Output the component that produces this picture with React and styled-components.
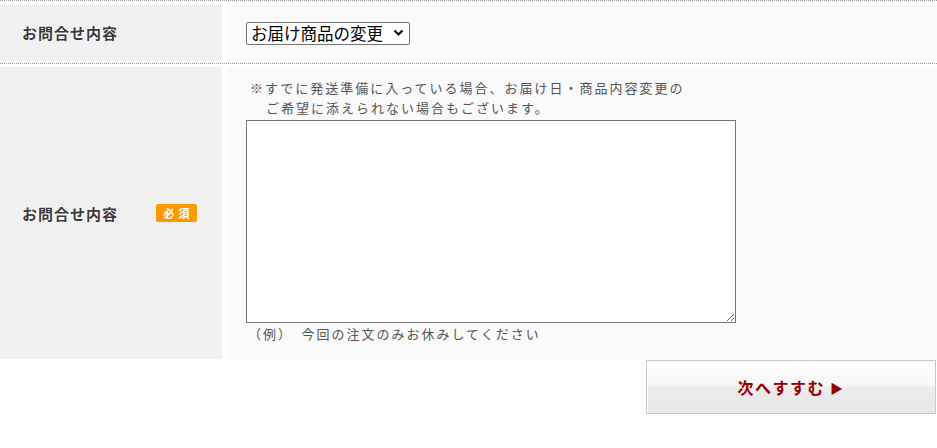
import React from "react";
import styled, { createGlobalStyle } from "styled-components";

const Global = createGlobalStyle`
  html, body { margin: 0; padding: 0; background: #fff; }
  body { font-family: "Noto Sans CJK JP", "Noto Sans", sans-serif; color: #333; }
  * { box-sizing: border-box; }
`;

const Form = styled.div`
  width: 937px;
`;

const Row = styled.div`
  display: grid;
  grid-template-columns: 222px 1fr;
  column-gap: 6px;
  border-top: 1px dotted #9a9a9a;
  padding: 3px 0 ${(p) => p.$pb || 0}px;
`;

const LabelCell = styled.div`
  background: #f1f1f1;
  height: ${(p) => p.$h}px;
  display: flex;
  align-items: center;
  justify-content: space-between;
  padding: 0 25px 0 22px;
`;

const LabelText = styled.span`
  font-size: 15px;
  font-weight: 700;
  color: #3a3a3a;
  letter-spacing: 1px;
  text-shadow: 0 0 2px #fff, 0 0 2px #fff;
`;

const Badge = styled.span`
  display: inline-flex;
  align-items: center;
  justify-content: center;
  width: 41px;
  height: 18px;
  background: #ff9900;
  border-radius: 2px;
  color: #fff;
  font-size: 11px;
  font-weight: 700;
  letter-spacing: 4px;
  padding-left: 4px;
  line-height: 1;
`;

const ValueCell = styled.div`
  background: #fafafa;
  height: ${(p) => p.$h}px;
  display: flex;
  flex-direction: column;
  justify-content: ${(p) => (p.$center ? "center" : "flex-start")};
  padding: ${(p) => (p.$center ? "0 18px" : "11px 18px 0")};
`;

const SelectWrap = styled.div`
  position: relative;
  width: 164px;
  height: 23px;
  margin-top: -1px;
`;

const Select = styled.select`
  appearance: none;
  -webkit-appearance: none;
  width: 164px;
  height: 23px;
  font-family: "Noto Sans CJK JP", sans-serif;
  font-size: 16.5px;
  line-height: 21px;
  color: #000;
  background: #fff;
  border: 1px solid #767676;
  border-radius: 2px;
  padding: 0 0 0 4px;
`;

const Chevron = styled.svg`
  position: absolute;
  right: 6px;
  top: 8px;
  width: 11px;
  height: 8px;
  pointer-events: none;
`;

const Note = styled.p`
  margin: 0;
  font-size: 13px;
  line-height: 20px;
  letter-spacing: 2px;
  color: #555;
  padding-left: 20px;
  text-indent: -16px;
`;

const TextArea = styled.textarea`
  display: block;
  width: 490px;
  height: 203px;
  margin: 2px 0 0;
  border: 1px solid #767676;
  border-radius: 0;
  background: #fff;
  font-family: "Noto Sans CJK JP", sans-serif;
  font-size: 13px;
`;

const Example = styled.p`
  margin: 0;
  padding-left: 2px;
  font-size: 13px;
  line-height: 21px;
  letter-spacing: 2px;
  color: #555;
`;

const ButtonBar = styled.div`
  display: flex;
  justify-content: flex-end;
  padding: 1px 1px 0 0;
`;

const NextButton = styled.button`
  width: 290px;
  height: 54px;
  border: 1px solid #c9c9c9;
  box-shadow: inset 1px 1px 0 #fff;
  background: linear-gradient(#ffffff 0%, #f7f7f7 45%, #ececec 52%, #e7e7e7 100%);
  color: #990000;
  font-family: "Noto Sans CJK JP", sans-serif;
  font-size: 16px;
  font-weight: 700;
  letter-spacing: 1.5px;
  display: flex;
  align-items: center;
  justify-content: center;
  gap: 5px;
  padding: 0;
  cursor: pointer;
`;

const Arrow = styled.span`
  font-size: 13px;
  line-height: 1;
`;

export default function App() {
  return (
    <>
      <Global />
      <Form>
        <Row $pb={2}>
          <LabelCell $h={57}>
            <LabelText>お問合せ内容</LabelText>
          </LabelCell>
          <ValueCell $h={57} $center>
            <SelectWrap>
              <Select defaultValue="change">
                <option value="change">お届け商品の変更</option>
              </Select>
              <Chevron viewBox="0 0 11 8">
                <path d="M1.5 1.5 L5.5 5.5 L9.5 1.5" fill="none" stroke="#000" strokeWidth="2.2" />
              </Chevron>
            </SelectWrap>
          </ValueCell>
        </Row>
        <Row>
          <LabelCell $h={292}>
            <LabelText>お問合せ内容</LabelText>
            <Badge>必須</Badge>
          </LabelCell>
          <ValueCell $h={292}>
            <Note>
              ※すでに発送準備に入っている場合、お届け日・商品内容変更の
              <br />
              ご希望に添えられない場合もございます。
            </Note>
            <TextArea />
            <Example>（例）　今回の注文のみお休みしてください</Example>
          </ValueCell>
        </Row>
        <ButtonBar>
          <NextButton type="button">
            次へすすむ<Arrow>▶</Arrow>
          </NextButton>
        </ButtonBar>
      </Form>
    </>
  );
}
